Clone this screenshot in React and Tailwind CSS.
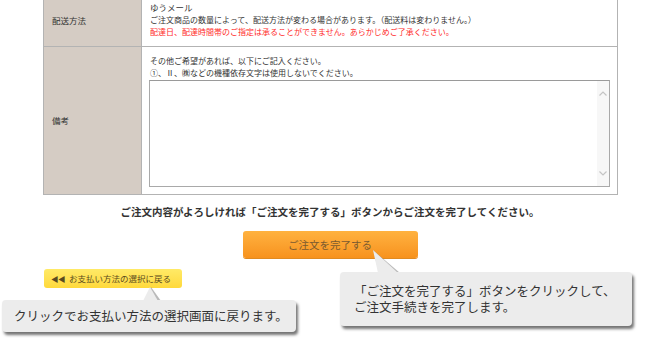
import React from "react";

const font = "font-['Noto_Sans_CJK_JP','Noto_Sans',sans-serif]";

// Fake scrollbar strip for the memo box
const ScrollStrip = () => (
  <div className="w-[12px] h-full bg-[#f7f7f7] flex flex-col justify-between items-center py-[10px]">
    <svg width="8" height="5" viewBox="0 0 8 5">
      <path d="M0.5 4.5 L4 1 L7.5 4.5" fill="none" stroke="#c4c4c4" strokeWidth="1.2" />
    </svg>
    <svg width="8" height="5" viewBox="0 0 8 5">
      <path d="M0.5 0.5 L4 4 L7.5 0.5" fill="none" stroke="#c4c4c4" strokeWidth="1.2" />
    </svg>
  </div>
);

const App = () => {
  return (
    <div className={`relative w-[660px] h-[346px] overflow-hidden bg-white text-[#333] ${font}`}>
      {/* order table */}
      <div className="w-[575px] ml-[43px] mt-[-6px] border-l border-r border-b border-[#b3b3b3]">
        <div className="flex h-[53px] border-b border-[#b3b3b3]">
          <div className="w-[98px] shrink-0 bg-[#d5ccc4] border-r border-[#b3b3b3] flex items-center pl-[8px] text-[8.5px]">
            配送方法
          </div>
          <div className="flex-1 pl-[8px] pt-[7px] text-[8px] leading-[12.5px]">
            <p className="text-[8.5px]">ゆうメール</p>
            <p>ご注文商品の数量によって、配送方法が変わる場合があります。（配送料は変わりません。）</p>
            <p className="text-[#ff2a2a]">配達日、配達時間帯のご指定は承ることができません。あらかじめご了承ください。</p>
          </div>
        </div>
        <div className="flex h-[147px]">
          <div className="w-[98px] shrink-0 bg-[#d5ccc4] border-r border-[#b3b3b3] flex items-center pl-[8px] text-[8.5px]">
            備考
          </div>
          <div className="flex-1 pl-[7px] pt-[8px] text-[8px] leading-[12px]">
            <p className="pl-[1px]">その他ご希望があれば、以下にご記入ください。</p>
            <p className="pl-[1px]">①、Ⅱ、㈱などの機種依存文字は使用しないでください。</p>
            <div className="mt-[1px] w-[461px] h-[107px] flex border border-[#a9a9a9] border-t-[#9a9a9a] bg-white">
              <textarea className="flex-1 resize-none outline-none bg-white p-1 text-[8px]" />
              <ScrollStrip />
            </div>
          </div>
        </div>
      </div>

      <p className="mt-[10px] text-center text-[10.5px] leading-[14px] font-bold text-[#333]">
        ご注文内容がよろしければ「ご注文を完了する」ボタンからご注文を完了してください。
      </p>

      <div className="mt-[12px] flex justify-center">
        <button className="w-[175px] h-[27px] rounded-[3px] bg-gradient-to-b from-[#ffb23f] to-[#f7921c] text-[10.5px] text-[#7a5a30] shadow-[0_1px_0_#e08a20]">
          ご注文を完了する
        </button>
      </div>

      <div className="mt-[11px] ml-[44px]">
        <button className="w-[138px] h-[19px] rounded-[3px] bg-gradient-to-b from-[#ffea66] to-[#ffd93a] flex items-center pl-[7px] gap-[4px] text-[8.5px] text-[#5a4a20]">
          <span className="text-[7.5px] tracking-[-0.5px]">◀◀</span>
          <span>お支払い方法の選択に戻る</span>
        </button>
      </div>

      {/* callout: back button */}
      <svg className="absolute left-[140px] top-[286px]" width="24" height="16" viewBox="0 0 24 16">
        <polygon points="11,1 5,15 21,15" fill="#8a8a8a" opacity="0.6" />
        <polygon points="10,1 3,15 18,15" fill="#ececec" />
      </svg>
      <div className="absolute left-[2px] top-[300px] w-[294px] h-[32px] rounded-[4px] bg-[#ececec] shadow-[2px_3px_3px_rgba(0,0,0,0.55)] flex items-center pl-[12px] text-[12.5px] text-[#333]">
        クリックでお支払い方法の選択画面に戻ります。
      </div>

      {/* callout: complete button */}
      <svg className="absolute left-[370px] top-[249px]" width="32" height="25" viewBox="0 0 32 25">
        <polygon points="3,1 9,24 30,24" fill="#8a8a8a" opacity="0.6" />
        <polygon points="3,1 8,24 28,24" fill="#ececec" />
      </svg>
      <div className="absolute left-[340px] top-[272px] w-[292px] h-[54px] rounded-[4px] bg-[#ececec] shadow-[2px_3px_3px_rgba(0,0,0,0.55)] pl-[14px] pt-[11px] text-[12.5px] leading-[16px] text-[#333]">
        <p>「ご注文を完了する」ボタンをクリックして、</p>
        <p>ご注文手続きを完了します。</p>
      </div>
    </div>
  );
};

export default App;
